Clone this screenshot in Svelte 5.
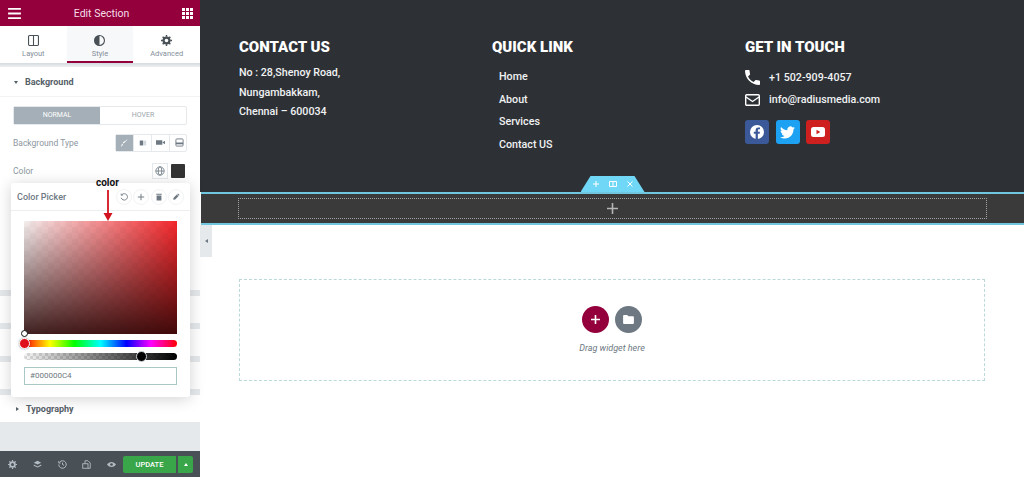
<script>
	const stripes = [1, 2, 3];
	const address = ['No : 28,Shenoy Road,', 'Nungambakkam,', 'Chennai – 600034'];
	const links = ['Home', 'About', 'Services', 'Contact US'];
</script>

<div class="page">
	<aside class="panel">
		<header class="top">
			<svg class="ico" viewBox="0 0 14 12" width="13" height="11"><path d="M0 1h14M0 6h14M0 11h14" stroke="#fff" stroke-width="2" /></svg>
			<span>Edit Section</span>
			<svg class="ico" viewBox="0 0 11 11" width="11" height="11" fill="#fff">
				{#each [0, 4, 8] as y}
					{#each [0, 4, 8] as x}
						<rect {x} {y} width="3" height="3" />
					{/each}
				{/each}
			</svg>
		</header>

		<nav class="tabs">
			<div class="tab">
				<svg viewBox="0 0 12 12" width="11" height="11" fill="none" stroke="#495157" stroke-width="1.2"><rect x=".6" y=".6" width="10.800" height="10.800" rx="1" /><path d="M6 1v10" /></svg>
				<span>Layout</span>
			</div>
			<div class="tab active">
				<svg viewBox="0 0 12 12" width="11" height="11"><circle cx="6" cy="6" r="5.400" fill="none" stroke="#495157" stroke-width="1.2" /><path d="M6 .6a5.400 5.400 0 0 0 0 10.800z" fill="#495157" /></svg>
				<span>Style</span>
			</div>
			<div class="tab">
				<svg viewBox="0 0 12 12" width="11" height="11"><circle cx="6" cy="6" r="3.2" fill="none" stroke="#495157" stroke-width="2.4" /><path d="M6 0v2M6 10v2M0 6h2M10 6h2M1.8 1.8l1.4 1.4M8.8 8.8l1.4 1.4M1.8 10.2l1.4-1.4M8.8 3.2l1.4-1.4" stroke="#495157" stroke-width="1.6" /></svg>
				<span>Advanced</span>
			</div>
		</nav>
		<div class="tab-shade"></div>

		<section class="background">
			<h3><i class="caret down"></i>Background</h3>
			<div class="body">
				<div class="switch">
					<span class="on">NORMAL</span>
					<span>HOVER</span>
				</div>
				<div class="row">
					<label for="bg">Background Type</label>
					<div class="choices" id="bg">
						<span class="on">
							<svg viewBox="0 0 10 10" width="9" height="9"><path d="M9 1 4 6 3 5zM3.500 6 2.500 9 1 9.500 2 7z" fill="#fff" /></svg>
						</span>
						<span><svg viewBox="0 0 10 10" width="8" height="8"><rect x="1" y="2" width="8" height="6" fill="#d5dadf" /><rect x="1" y="2" width="4" height="6" fill="#6d7882" /></svg></span>
						<span><svg viewBox="0 0 10 10" width="9" height="9"><rect x="0" y="2.500" width="7" height="5" fill="#6d7882" /><path d="M7 5l3-2v4z" fill="#6d7882" /></svg></span>
						<span><svg viewBox="0 0 10 10" width="9" height="9" fill="none" stroke="#6d7882"><rect x="1" y="1" width="8" height="8" rx="1" /><path d="M1 6h8" stroke-width="2" /></svg></span>
					</div>
				</div>
				<div class="row color-row">
					<span class="label">Color</span>
					<div class="color-btns">
						<span class="globe">
							<svg viewBox="0 0 12 12" width="10" height="10" fill="none" stroke="#6d7882"><circle cx="6" cy="6" r="5" /><ellipse cx="6" cy="6" rx="2.200" ry="5" /><path d="M1 6h10" /></svg>
						</span>
						<span class="swatch"></span>
					</div>
				</div>
			</div>
		</section>

		{#each stripes as s (s)}
			<div class="collapsed"></div>
		{/each}
		<section class="collapsed last">
			<h3><i class="caret"></i>Typography</h3>
		</section>

		<div class="fill"></div>

		<footer class="bar">
			<div class="bar-icons">
				<svg viewBox="0 0 12 12" width="9" height="9"><circle cx="6" cy="6" r="3.200" fill="none" stroke="#b4bcc3" stroke-width="2.400" /><path d="M6 0v2M6 10v2M0 6h2M10 6h2M1.800 1.800l1.400 1.400M8.800 8.800l1.400 1.400M1.800 10.200l1.400-1.400M8.800 3.200l1.400-1.400" stroke="#b4bcc3" stroke-width="1.600" /></svg>
				<svg viewBox="0 0 12 12" width="9" height="9" fill="#b4bcc3"><path d="M6 1l5 2.500L6 6 1 3.500zM1 6l5 2.500L11 6v1.500L6 10 1 7.500z" /></svg>
				<svg viewBox="0 0 12 12" width="9" height="9" fill="none" stroke="#b4bcc3" stroke-width="1.300"><path d="M2 3a5 5 0 1 1-1 3M1 1.500V4h2.500M6 3.500V6l2 1" /></svg>
				<svg viewBox="0 0 12 12" width="9" height="9" fill="none" stroke="#b4bcc3" stroke-width="1.200"><rect x="1" y="5" width="7" height="6" /><path d="M4 5V1h4l3 3v7H8" /></svg>
				<svg viewBox="0 0 12 12" width="9" height="9"><path d="M0 6c3-4.500 9-4.500 12 0-3 4.500-9 4.500-12 0z" fill="#b4bcc3" /><circle cx="6" cy="6" r="1.800" fill="#495157" /></svg>
			</div>
			<div class="publish">
				<span class="update">UPDATE</span>
				<span class="more"><i></i></span>
			</div>
		</footer>

		<div class="picker">
			<div class="picker-head">
				<span>Color Picker</span>
				<div class="picker-tools">
					<span><svg viewBox="0 0 10 10" width="8" height="8" fill="none" stroke="#6d7882" stroke-width="1.100"><path d="M2.500 2A4 4 0 1 1 1.500 6M1.500 .8v2h2" /></svg></span>
					<span><svg viewBox="0 0 10 10" width="8" height="8"><path d="M5 1v8M1 5h8" stroke="#6d7882" stroke-width="1.200" /></svg></span>
					<span><svg viewBox="0 0 10 10" width="8" height="8" fill="#6d7882"><path d="M2 3h6v6.500H2zM1.500 1h7v1.300h-7z" /></svg></span>
					<span><svg viewBox="0 0 10 10" width="8" height="8" fill="#6d7882"><path d="M6 2l2 2-4 4-2.500.5L2 6zM6.500 1.500l1-1 2 2-1 1z" /></svg></span>
				</div>
			</div>
			<div class="sat"><i class="sat-dot"></i></div>
			<div class="hue"><i class="hue-dot"></i></div>
			<div class="alpha"><i class="alpha-dot"></i></div>
			<div class="hex">#000000C4</div>
		</div>

		<div class="note">color</div>
		<svg class="arrow" viewBox="0 0 10 32" width="10" height="32"><path d="M5 0v25" stroke="#d3121f" stroke-width="1.800" /><path d="M.5 23h9L5 31z" fill="#d3121f" /></svg>
	</aside>

	<main class="canvas">
		<div class="site-footer">
			<div class="col">
				<h2>CONTACT US</h2>
				{#each address as line}
					<p>{line}</p>
				{/each}
			</div>
			<div class="col">
				<h2>QUICK LINK</h2>
				<ul>
					{#each links as link}
						<li>{link}</li>
					{/each}
				</ul>
			</div>
			<div class="col">
				<h2>GET IN TOUCH</h2>
				<div class="contacts">
					<div class="contact">
						<svg viewBox="3 3 18 18" width="15" height="15" fill="#fff"><path d="M6.620 10.790c1.440 2.830 3.760 5.140 6.590 6.590l2.200-2.200c.27-.27.670-.36 1.020-.24 1.120.37 2.330.57 3.570.57.550 0 1 .45 1 1V20c0 .55-.45 1-1 1-9.390 0-17-7.610-17-17 0-.55.45-1 1-1h3.500c.55 0 1 .45 1 1 0 1.250.2 2.450.57 3.570.11.35.03.74-.25 1.020l-2.200 2.200z" /></svg>
						<span>+1 502-909-4057</span>
					</div>
					<div class="contact">
						<svg viewBox="0 0 15 12" width="15" height="12" fill="none" stroke="#fff" stroke-width="1.400"><rect x=".7" y=".7" width="13.600" height="10.600" rx="1" /><path d="M1 3l6.500 4.500L14 3" /></svg>
						<span>info@radiusmedia.com</span>
					</div>
				</div>
				<div class="social">
					<span class="fb">
						<svg viewBox="0 0 24 24" width="14" height="14"><circle cx="12" cy="12" r="12" fill="#fff" /><path d="M13.500 24v-9h3l.6-3.500h-3.600V9.300c0-1 .5-1.900 2-1.900h1.700V4.400s-1.500-.3-3-.3c-3 0-4.600 1.800-4.600 4.900v2.500H6.500V15h3.100v9z" fill="#3b5998" /></svg>
					</span>
					<span class="tw">
						<svg viewBox="0 0 24 24" width="15" height="15" fill="#fff"><path d="M23.950 4.570a10 10 0 0 1-2.820.77 4.960 4.960 0 0 0 2.160-2.720c-.95.550-2 .96-3.120 1.200a4.920 4.920 0 0 0-8.380 4.480C7.690 8.090 4.070 6.130 1.640 3.160a4.820 4.820 0 0 0-.66 2.470c0 1.710.87 3.200 2.190 4.100a4.900 4.900 0 0 1-2.230-.61v.06c0 2.380 1.690 4.380 3.950 4.830a4.900 4.900 0 0 1-2.210.08 4.940 4.940 0 0 0 4.600 3.420A9.870 9.870 0 0 1 0 19.540a14 14 0 0 0 7.560 2.210c9.050 0 14-7.500 14-13.980 0-.21 0-.42-.02-.63a9.900 9.900 0 0 0 2.410-2.570z" /></svg>
					</span>
					<span class="yt">
						<svg viewBox="0 0 14 10" width="14" height="10"><rect width="14" height="10" rx="2.500" fill="#fff" /><path d="M5.500 2.800v4.400L9.300 5z" fill="#cd201f" /></svg>
					</span>
				</div>
			</div>
		</div>

		<div class="new-section">
			<div class="handle">
				<svg viewBox="0 0 50 12" width="50" height="12" fill="none" stroke="#fff"><path d="M8 3v6M5 6h6M28.500 3.500h-7v5h7zM25 3.500v5M39.500 3.500l5 5M44.500 3.500l-5 5" /></svg>
			</div>
			<div class="section-inner">
				<svg viewBox="0 0 11 11" width="11" height="11"><path d="M5.500 0v11M0 5.500h11" stroke="#b5b5b5" stroke-width="1.600" /></svg>
			</div>
		</div>

		<div class="drop-wrap">
			<div class="collapse-tab"><i></i></div>
			<div class="drop">
				<div class="drop-btns">
					<span class="add">
						<svg viewBox="0 0 10 10" width="9" height="9"><path d="M5 0v10M0 5h10" stroke="#fff" stroke-width="1.800" /></svg>
					</span>
					<span class="tpl">
						<svg viewBox="0 0 12 10" width="11" height="9" fill="#fff"><path d="M0 1a1 1 0 0 1 1-1h3.500L6 1.500h5a1 1 0 0 1 1 1V9a1 1 0 0 1-1 1H1a1 1 0 0 1-1-1z" /></svg>
					</span>
				</div>
				<em>Drag widget here</em>
			</div>
		</div>
	</main>
</div>

<style>
	:global(body) {
		margin: 0;
		overflow: hidden;
	}

	.page {
		display: flex;
		width: 1024px;
		height: 477px;
		font-family: Roboto, 'Liberation Sans', sans-serif;
	}

	/* editor panel */
	.panel {
		position: relative;
		display: flex;
		flex-direction: column;
		width: 200px;
		flex: none;
		background: #e6e9ec;
		color: #6d7882;
	}

	.top {
		display: flex;
		justify-content: space-between;
		align-items: center;
		height: 26px;
		padding: 0 7px 0 8px;
		box-sizing: border-box;
		background: #93003c;
		color: #f5dfe7;
		font-size: 10.5px;
	}

	.tabs {
		display: grid;
		grid-template-columns: repeat(3, 1fr);
		height: 37px;
		background: #fff;
	}

	.tab {
		display: flex;
		flex-direction: column;
		align-items: center;
		padding-top: 9px;
		gap: 3px;
		box-sizing: border-box;
		font-size: 7.5px;
		color: #848f99;
	}

	.tab.active {
		background: #f7f8f9;
		border-bottom: 2px solid #93003c;
	}

	.tab-shade {
		height: 4px;
		background: linear-gradient(#d5dadf, #eef0f2);
	}

	.background {
		height: 223px;
		background: #fff;
	}

	h3 {
		display: flex;
		align-items: center;
		margin: 0;
		height: 30px;
		padding: 1px 0 0 14px;
		box-sizing: border-box;
		gap: 7px;
		font-size: 9px;
		font-weight: 700;
		color: #556068;
		border-bottom: 1px solid #f1f3f5;
	}

	.caret {
		width: 0;
		height: 0;
		border-top: 2px solid transparent;
		border-bottom: 2px solid transparent;
		border-left: 3px solid #556068;
	}

	.caret.down {
		border-left: 2.500px solid transparent;
		border-right: 2.500px solid transparent;
		border-top: 3px solid #556068;
		border-bottom: 0;
	}

	.body {
		padding: 9px 13px 0;
	}

	.switch {
		display: grid;
		grid-template-columns: 1fr 1fr;
		height: 19px;
		border: 1px solid #e6e9ec;
		border-radius: 2px;
		box-sizing: border-box;
		font-size: 7px;
		color: #9aa3ab;
		line-height: 17px;
		text-align: center;
	}

	.switch .on {
		background: #a4afb7;
		color: #fff;
	}

	.row {
		display: flex;
		justify-content: space-between;
		align-items: center;
		margin-top: 9px;
		height: 17px;
		font-size: 8.500px;
		color: #8d97a0;
	}

	.color-row {
		margin-top: 11px;
	}

	.choices {
		display: grid;
		grid-template-columns: repeat(4, 18px);
		border: 1px solid #e6e9ec;
		box-sizing: border-box;
		height: 18px;
		width: 72px;
		border-radius: 2px;
	}

	.choices span {
		display: flex;
		align-items: center;
		justify-content: center;
		border-right: 1px solid #e6e9ec;
	}

	.choices span:last-child {
		border-right: 0;
	}

	.choices .on {
		background: #a4afb7;
	}

	.color-btns {
		display: flex;
		align-items: center;
		gap: 3px;
		margin-right: 2px;
	}

	.globe {
		display: flex;
		align-items: center;
		justify-content: center;
		width: 16px;
		height: 16px;
		border: 1px solid #e6e9ec;
		box-sizing: border-box;
	}

	.swatch {
		width: 14px;
		height: 14px;
		background: #333;
		border-radius: 1px;
	}

	.collapsed {
		height: 27px;
		margin-top: 6px;
		background: #fff;
	}

	.last h3 {
		height: 27px;
		border: 0;
		padding-left: 16px;
	}

	.fill {
		flex: 1;
	}

	.bar {
		display: flex;
		align-items: center;
		justify-content: space-between;
		height: 26px;
		padding: 0 7px 0 8px;
		background: #495157;
	}

	.bar-icons {
		display: flex;
		gap: 15.800px;
	}

	.publish {
		display: flex;
		gap: 2px;
		height: 17px;
		font-size: 7.500px;
		font-weight: 500;
		color: #fff;
		line-height: 17px;
		text-align: center;
	}

	.update {
		width: 53px;
		background: #39a649;
		border-radius: 2px 0 0 2px;
	}

	.more {
		display: flex;
		align-items: center;
		justify-content: center;
		width: 15px;
		background: #39a649;
		border-radius: 0 2px 2px 0;
	}

	.more i {
		border-left: 2.500px solid transparent;
		border-right: 2.500px solid transparent;
		border-bottom: 3px solid #fff;
	}

	/* color popover */
	.picker {
		position: absolute;
		top: 183px;
		left: 11px;
		width: 179px;
		height: 214px;
		box-sizing: border-box;
		padding: 0 13px;
		background: #fff;
		border-radius: 3px;
		box-shadow: 0 2px 15px rgba(0, 0, 0, 0.18);
	}

	.picker-head {
		display: flex;
		justify-content: space-between;
		align-items: center;
		height: 27px;
		margin: 0 -13px 10px;
		padding: 0 6px 0 6px;
		border-bottom: 1px solid #eceef0;
		font-size: 9px;
		font-weight: 500;
		color: #6d7882;
	}

	.picker-tools {
		display: flex;
		gap: 1.500px;
	}

	.picker-tools span {
		display: flex;
		align-items: center;
		justify-content: center;
		width: 16px;
		height: 16px;
		box-sizing: border-box;
		border: 1px solid #f1f3f5;
		border-radius: 50%;
	}

	.sat {
		position: relative;
		height: 113px;
		background:
			linear-gradient(to bottom, rgba(0, 0, 0, 0), rgba(40, 5, 5, 0.88)),
			repeating-conic-gradient(rgba(0, 0, 0, 0.025) 0 25%, rgba(0, 0, 0, 0) 0 50%) 0 0 / 12px 12px,
			linear-gradient(to right, #f4eeee, #f5282c);
	}

	.sat-dot {
		position: absolute;
		left: -3px;
		bottom: -3px;
		width: 5px;
		height: 5px;
		background: #fff;
		border: 1px solid #111;
		border-radius: 50%;
	}

	.hue {
		position: relative;
		height: 7px;
		margin-top: 6px;
		border-radius: 4px;
		background: linear-gradient(to right, #f00, #ff0 17%, #0f0 33%, #0ff 50%, #00f 67%, #f0f 83%, #f00);
	}

	.hue-dot {
		position: absolute;
		left: -5px;
		top: -2px;
		width: 9px;
		height: 9px;
		background: #e0101a;
		border: 1px solid #fff;
		border-radius: 50%;
		box-shadow: 0 0 2px rgba(0, 0, 0, 0.4);
	}

	.alpha {
		position: relative;
		height: 7px;
		margin-top: 6px;
		border-radius: 4px;
		background:
			linear-gradient(to right, rgba(0, 0, 0, 0), #000),
			repeating-conic-gradient(#d8d8d8 0 25%, #f5f5f5 0 50%) 0 0 / 6px 6px;
	}

	.alpha-dot {
		position: absolute;
		left: 112px;
		top: -2px;
		width: 9px;
		height: 9px;
		background: #000;
		border: 1px solid #cfd3d6;
		border-radius: 50%;
	}

	.hex {
		height: 18px;
		margin-top: 7px;
		padding-left: 5px;
		box-sizing: border-box;
		border: 1px solid #a9c7c4;
		font-size: 8px;
		line-height: 16px;
		color: #6d7882;
	}

	.note {
		position: absolute;
		top: 177px;
		left: 96px;
		font-size: 10px;
		font-weight: 700;
		color: #111;
	}

	.arrow {
		position: absolute;
		top: 190px;
		left: 103px;
	}

	/* page preview */
	.canvas {
		flex: 1;
		min-width: 0;
		display: flex;
		flex-direction: column;
		background: #fff;
	}

	.site-footer {
		display: grid;
		grid-template-columns: 253px 253px 1fr;
		height: 192px;
		padding: 38px 0 0 39px;
		box-sizing: border-box;
		background: #2d3136;
		color: #f1f2f3;
	}

	h2 {
		margin: 0 0 7px;
		font-size: 15px;
		line-height: 18px;
		font-weight: 900;
		color: #fff;
	}

	.col p {
		margin: 0;
		font-size: 10.700px;
		font-weight: 500;
		line-height: 19.500px;
	}

	ul {
		list-style: none;
		margin: 10px 0 0;
		padding: 0 0 0 7px;
	}

	li {
		font-size: 10.700px;
		font-weight: 500;
		line-height: 22.700px;
	}

	.contacts {
		margin-top: 10px;
	}

	.contact {
		display: flex;
		align-items: center;
		gap: 9px;
		height: 22.500px;
		font-size: 10.700px;
		font-weight: 500;
	}

	.social {
		display: flex;
		gap: 6.500px;
		margin-top: 9px;
	}

	.social span {
		display: flex;
		align-items: center;
		justify-content: center;
		width: 24px;
		height: 24px;
		border-radius: 3px;
	}

	.fb {
		background: #3b5998;
	}

	.tw {
		background: #1da1f2;
	}

	.yt {
		background: #cd201f;
	}

	.new-section {
		position: relative;
		height: 33px;
		margin-left: 1px;
		box-sizing: border-box;
		padding: 4px 37px;
		background: #3a3a3a;
		border: solid #6fc6de;
		border-width: 2px 0;
	}

	.handle {
		position: absolute;
		top: -18px;
		left: 50%;
		width: 64px;
		height: 16px;
		margin-left: -32px;
		display: flex;
		align-items: center;
		justify-content: center;
		background: #71d7f7;
		clip-path: polygon(10px 0, 54px 0, 100% 100%, 0 100%);
	}

	.section-inner {
		display: flex;
		align-items: center;
		justify-content: center;
		height: 100%;
		box-sizing: border-box;
		border: 1px dotted #a5a5a5;
	}

	.drop-wrap {
		position: relative;
		flex: 1;
		padding: 54px 39px 0;
	}

	.collapse-tab {
		position: absolute;
		top: 0;
		left: 0;
		width: 12px;
		height: 32px;
		display: flex;
		align-items: center;
		justify-content: center;
		background: #e6e9ec;
	}

	.collapse-tab i {
		border-top: 2.500px solid transparent;
		border-bottom: 2.500px solid transparent;
		border-right: 3px solid #6d7882;
	}

	.drop {
		display: flex;
		flex-direction: column;
		align-items: center;
		height: 102px;
		padding-top: 26px;
		box-sizing: border-box;
		border: 1px dashed #bcd9d9;
	}

	.drop-btns {
		display: flex;
		gap: 6px;
	}

	.drop-btns span {
		display: flex;
		align-items: center;
		justify-content: center;
		width: 27px;
		height: 27px;
		border-radius: 50%;
	}

	.add {
		background: #93003c;
	}

	.tpl {
		background: #6d7882;
	}

	.drop em {
		margin-top: 10px;
		font-size: 9px;
		color: #6d7882;
	}
</style>
